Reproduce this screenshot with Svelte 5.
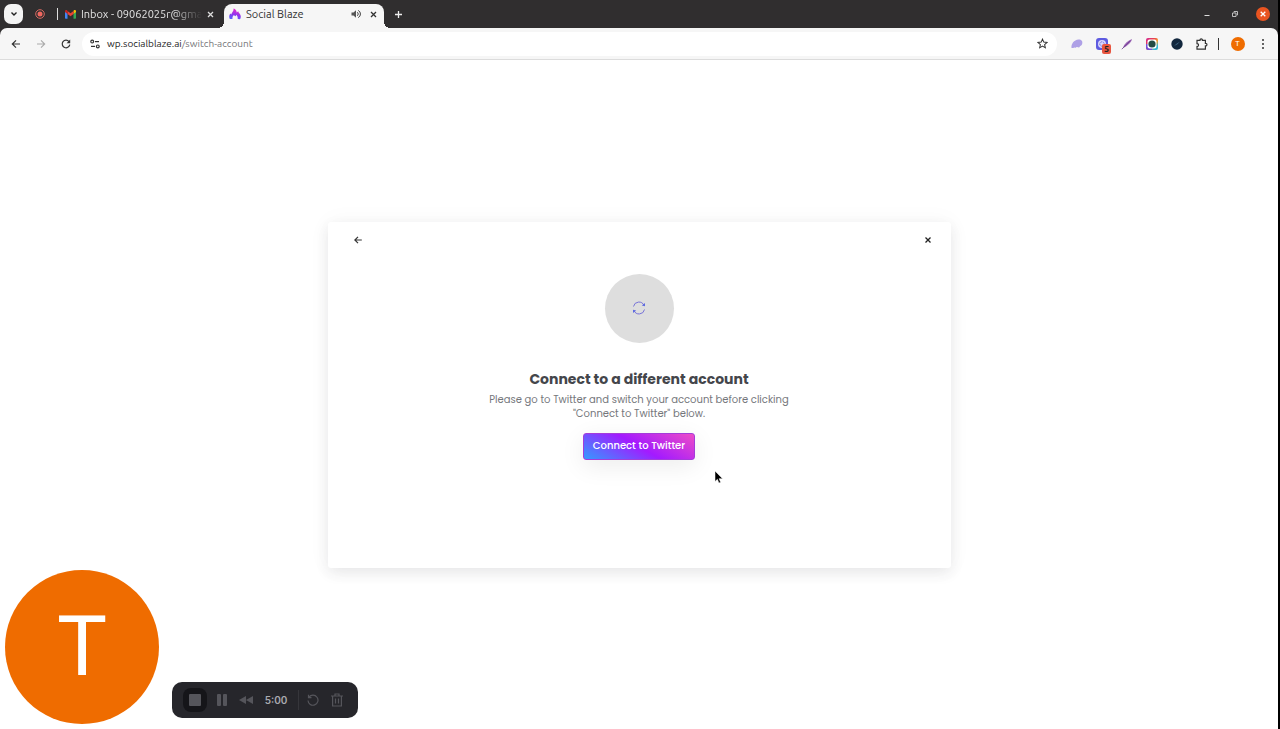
<script lang="ts">
  let address = $state('wp.socialblaze.ai/switch-account');
  const slash = $derived(address.indexOf('/'));
</script>

<div class="browser">
  <header class="chrome">
    <div class="tabstrip">
      <button class="tab-search" aria-label="Search tabs">
        <svg width="8" height="8" viewBox="0 0 8 8"><path d="M1.5 2.5 4 5l2.5-2.5" fill="none" stroke="#222" stroke-width="1.4" /></svg>
      </button>
      <button class="pinned" aria-label="Recording tab">
        <svg width="10" height="10" viewBox="0 0 10 10">
          <circle cx="5" cy="5" r="4.3" fill="none" stroke="#d96b63" />
          <circle cx="5" cy="5" r="2.5" fill="#f0675f" />
        </svg>
      </button>
      <span class="divider"></span>
      <div class="tab">
        <svg width="11" height="9" viewBox="0 0 22 18">
          <path d="M0 2.5V16a1.5 1.5 0 0 0 1.500 1.500H5V7z" fill="#4285f4" />
          <path d="M22 2.500V16a1.500 1.500 0 0 1-1.500 1.500H17V7z" fill="#34a853" />
          <path d="M17 2v6l5-4V2.500C22 .3 19.500-.6 17.800.7z" fill="#fbbc04" />
          <path d="M5 8V2l6 4.500L17 2v6l-6 4.500z" fill="#ea4335" />
          <path d="M0 2.500V4l5 4V2L4.200.7C2.500-.6 0 .3 0 2.500z" fill="#c5221f" />
        </svg>
        <span class="title fade">Inbox - 09062025r@gma</span>
        <button class="close" aria-label="Close Inbox tab">
          <svg width="7" height="7" viewBox="0 0 7 7"><path d="m1 1 5 5m0-5L1 6" stroke="#ddd" stroke-width="1.3" /></svg>
        </button>
      </div>
      <div class="tab active">
        <svg width="12" height="12" viewBox="0 0 12 12">
          <defs>
            <linearGradient id="blaze" x1="0" y1="1" x2="0.3" y2="0">
              <stop offset="0" stop-color="#4a6cff" />
              <stop offset=".5" stop-color="#8a35ee" />
              <stop offset="1" stop-color="#e22bd0" />
            </linearGradient>
          </defs>
          <path d="M4.500.6c2 .6 3.300 2 3.200 4l1.500-1.400c.3 1.300.9 1.800 1.700 2.800 1 1.500 1.300 3.500.1 5.200L8.700 11c.2-1.800-.3-3.200-1.500-4.200-.2.800-.5 1.200-1 1.400-.4-.6-.9-.9-1.500-1-.9 1-1.500 2-1.200 3.900L.8 11C-.2 9 .1 7 1.300 5.500l1 1C2.600 4.500 5 3.500 4.500.6z" fill="url(#blaze)" />
        </svg>
        <span class="title">Social Blaze</span>
        <button class="close" aria-label="Mute tab">
          <svg width="10" height="10" viewBox="0 0 10 10">
            <path d="M.5 3.500h2L5 1.200v7.600L2.500 6.500h-2z" fill="#555" />
            <path d="M6.300 3.200a2.300 2.300 0 0 1 0 3.600M7.200 1.400a4 4 0 0 1 0 7.200" fill="none" stroke="#444" />
          </svg>
        </button>
        <button class="close" aria-label="Close Social Blaze tab">
          <svg width="7" height="7" viewBox="0 0 7 7"><path d="m1 1 5 5m0-5L1 6" stroke="#333" stroke-width="1.3" /></svg>
        </button>
      </div>
      <button class="new-tab" aria-label="New tab">
        <svg width="9" height="9" viewBox="0 0 9 9"><path d="M4.500 1v7M1 4.500h7" stroke="#eee" stroke-width="1.3" /></svg>
      </button>
      <div class="window-controls">
        <button aria-label="Minimize">
          <svg width="8" height="8" viewBox="0 0 8 8"><path d="M1.500 5.500h5" stroke="#ddd" /></svg>
        </button>
        <button aria-label="Restore">
          <svg width="8" height="8" viewBox="0 0 8 8"><path d="M1.500 3h3.500v3.500H1.500zM3 2.500v-1h3.500V5h-1" fill="none" stroke="#ccc" stroke-width=".9" /></svg>
        </button>
        <button aria-label="Close window">
          <svg width="14" height="14" viewBox="0 0 14 14">
            <circle cx="7" cy="7" r="7" fill="#e95420" />
            <path d="m4.700 4.700 4.600 4.600m0-4.600L4.700 9.300" stroke="#fff" stroke-width="1.300" />
          </svg>
        </button>
      </div>
    </div>

    <nav class="toolbar">
      <button aria-label="Back">
        <svg width="10" height="10" viewBox="0 0 10 10"><path d="M9 5H1.500M5 1.300 1.300 5 5 8.700" fill="none" stroke="#333" stroke-width="1.200" /></svg>
      </button>
      <button aria-label="Forward" disabled>
        <svg width="10" height="10" viewBox="0 0 10 10"><path d="M1 5h7.500M5 1.300 8.700 5 5 8.700" fill="none" stroke="#aaa" stroke-width="1.100" /></svg>
      </button>
      <button aria-label="Reload">
        <svg width="10" height="10" viewBox="0 0 10 10">
          <path d="M8.800 5.600A3.800 3.800 0 1 1 8 2.600" fill="none" stroke="#333" stroke-width="1.200" />
          <path d="M9.200.6v3.600H5.600z" fill="#333" />
        </svg>
      </button>
      <div class="omnibox">
        <button aria-label="Site information">
          <svg width="10" height="10" viewBox="0 0 10 10" fill="none" stroke="#333" stroke-width="1.200">
            <circle cx="2.200" cy="2.600" r="1.400" /><path d="M5 2.600h4" />
            <circle cx="7.800" cy="7.400" r="1.400" /><path d="M1 7.400h4" />
          </svg>
        </button>
        <label class="address">
          <span class="url" aria-hidden="true"><b>{address.slice(0, slash)}</b>{address.slice(slash)}</span>
          <input type="text" aria-label="Address" bind:value={address} />
        </label>
        <button aria-label="Bookmark this tab">
          <svg width="11" height="11" viewBox="0 0 12 12"><path d="m6 1.200 1.400 3.300 3.600.3-2.700 2.400.8 3.500L6 8.800l-3.100 1.900.8-3.500L1 4.800l3.600-.3z" fill="none" stroke="#333" stroke-width="1.100" /></svg>
        </button>
      </div>
      <button aria-label="Extension: Loom">
        <svg width="12" height="10" viewBox="0 0 12 10"><path d="M.5 9C0 5 3 .8 7.500.5 11 .3 12 3 11 5.500 10.500 7 9 6.600 8.500 8 7.500 9.500 6.500 7 5.300 8.300 4.500 9.500 3.500 7.500 2.500 9z" fill="#aea0e6" /></svg>
      </button>
      <button class="badged" aria-label="Extension with 5 notifications">
        <svg width="12" height="12" viewBox="0 0 12 12">
          <rect width="12" height="12" rx="3" fill="#5e5be0" />
          <circle cx="6" cy="6" r="4" fill="#d8d7fa" />
          <circle cx="6" cy="6" r="2.200" fill="none" stroke="#5e5be0" stroke-dasharray="1 .7" />
        </svg>
        <span class="badge">5</span>
      </button>
      <button aria-label="Extension: Quill">
        <svg width="12" height="12" viewBox="0 0 12 12">
          <path d="M2 10C3 6 7 2.500 11 1c-.6 3-4.500 7-9 9z" fill="#9a63b4" />
          <path d="m.8 11.200 8.500-8.500" stroke="#6b3f91" stroke-width=".8" />
        </svg>
      </button>
      <button aria-label="Extension: Capture">
        <svg width="12" height="12" viewBox="0 0 12 12">
          <defs>
            <linearGradient id="lens" x1="0" y1="0" x2="1" y2="1">
              <stop offset="0" stop-color="#d1269b" /><stop offset=".35" stop-color="#e8424c" />
              <stop offset=".6" stop-color="#f3a52d" /><stop offset=".8" stop-color="#35b8d2" />
            </linearGradient>
          </defs>
          <rect width="12" height="12" rx="2" fill="url(#lens)" />
          <path d="M0 6v4a2 2 0 0 0 2 2h4V6z" fill="#7650d8" />
          <rect x="1.500" y="1.500" width="9" height="9" rx="2" fill="#fff" />
          <circle cx="6" cy="6" r="3.600" fill="#234b43" />
        </svg>
      </button>
      <button aria-label="Extension: Compass">
        <svg width="12" height="12" viewBox="0 0 12 12">
          <circle cx="6" cy="6" r="5.700" fill="#12273d" />
          <path d="m3 8 2.500-2.300L9 3.500 6.500 6.300z" fill="#426786" />
        </svg>
      </button>
      <button aria-label="Extensions">
        <svg width="12" height="12" viewBox="0 0 12 12"><path d="M1 2.300h3c-.2-1.800 2.600-1.800 2.400 0h3v3c2-.1 2 2.800 0 2.600v3.300H1V8.500c2 .1 2-3 0-2.900z" fill="none" stroke="#333" stroke-width="1.200" /></svg>
      </button>
      <span class="divider dark"></span>
      <button aria-label="Profile"><span class="profile">T</span></button>
      <button aria-label="Menu">
        <svg width="4" height="10" viewBox="0 0 4 10" fill="#333"><circle cx="2" cy="1" r="1" /><circle cx="2" cy="5" r="1" /><circle cx="2" cy="9" r="1" /></svg>
      </button>
    </nav>
  </header>

  <main>
    <section class="card">
      <div class="card-nav">
        <button aria-label="Go back">
          <svg width="8" height="8" viewBox="0 0 8 8"><path d="M7.800 4H1M4 .8.800 4 4 7.200" fill="none" stroke="#333" stroke-width="1.200" /></svg>
        </button>
        <button aria-label="Close">
          <svg width="6" height="6" viewBox="0 0 6 6"><path d="m.5.5 5 5m0-5-5 5" stroke="#222" stroke-width="1.300" /></svg>
        </button>
      </div>
      <div class="emblem">
        <svg width="14" height="14" viewBox="0 0 14 14" fill="none" stroke="#7773d8">
          <path d="M1.500 5.500A5.500 5.500 0 0 1 12 4.500M12.500 8.500A5.500 5.500 0 0 1 2 9.500" />
          <path d="M13 2v3.300L9.800 4.500zM1 12V8.700l3.200.8z" fill="#5f6be0" stroke="none" />
        </svg>
      </div>
      <h1>Connect to a different account</h1>
      <p>Please go to Twitter and switch your account before clicking "Connect to Twitter" below.</p>
      <button class="connect">Connect to Twitter</button>
    </section>
  </main>

  <aside class="recorder">
    <div class="camera">T</div>
    <div class="controls">
      <button class="stop" aria-label="Stop"><span></span></button>
      <button aria-label="Pause">
        <svg width="12" height="14" viewBox="0 0 12 14" fill="#55555b"><rect x="1" y="1" width="4" height="12" rx="1" /><rect x="7" y="1" width="4" height="12" rx="1" /></svg>
      </button>
      <button aria-label="Rewind">
        <svg width="14" height="8" viewBox="0 0 14 8" fill="#55555b"><path d="M7 0v8L0 4zM14 0v8L7 4z" /></svg>
      </button>
      <time>5:00</time>
      <span class="rule"></span>
      <button aria-label="Restart">
        <svg width="12" height="12" viewBox="0 0 12 12" fill="none" stroke="#55555b" stroke-width="1.200"><path d="M2 3.200A5 5 0 1 1 1 6.500M1.500.8v2.900h3" /></svg>
      </button>
      <button aria-label="Delete">
        <svg width="12" height="14" viewBox="0 0 12 14" fill="none" stroke="#55555b" stroke-width="1.200"><path d="M0 3h12M4 3V1h4v2M1.600 3v10h8.800V3M4.500 5.500v5M7.500 5.500v5" /></svg>
      </button>
    </div>
  </aside>

  <svg class="cursor" width="10" height="14" viewBox="0 0 10 14"><path d="M1 1v10.500l2.400-2.200 1.500 3.800 1.800-.8-1.600-3.600h3.500z" fill="#000" stroke="#fff" stroke-width=".5" /></svg>
</div>

<style>
  :global(body) {
    margin: 0;
    background: #000;
  }
  .browser {
    position: relative;
    display: flex;
    flex-direction: column;
    min-height: 100vh;
    margin-right: 2px;
    background: #fff;
    font-family: Ubuntu, 'Noto Sans', sans-serif;
    font-size: 11px;
    overflow: hidden;
  }
  button {
    display: flex;
    align-items: center;
    justify-content: center;
    padding: 0;
    border: 0;
    background: none;
    color: inherit;
    font: inherit;
  }
  svg {
    flex: none;
  }

  /* Tabs */
  .chrome {
    background: #302e2f;
  }
  .tabstrip {
    display: flex;
    align-items: center;
    height: 28px;
    padding: 0 1px 0 4px;
    color: #e4e4e4;
  }
  .tab-search {
    width: 19px;
    height: 20px;
    border-radius: 7px;
    background: #f4f4f4;
  }
  .pinned {
    width: 34px;
  }
  .divider {
    width: 1px;
    height: 12px;
    background: #ddd;
  }
  .tab {
    display: flex;
    align-items: center;
    box-sizing: border-box;
    gap: 5px;
    width: 160px;
    padding: 0 2px 0 7px;
  }
  .tab .fade {
    margin-right: -3px;
  }
  .tab.active {
    position: relative;
    align-self: stretch;
    margin: 4px 0 0 6px;
    padding: 0 4px 4px 5px;
    border-radius: 8px 8px 0 0;
    background: #f6f6f6;
    color: #333;
  }
  .tab.active::before,
  .tab.active::after {
    content: '';
    position: absolute;
    bottom: 0;
    width: 6px;
    height: 6px;
  }
  .tab.active::before {
    right: 100%;
    background: radial-gradient(circle at 0 0, transparent 6px, #f6f6f6 6px);
  }
  .tab.active::after {
    left: 100%;
    background: radial-gradient(circle at 100% 0, transparent 6px, #f6f6f6 6px);
  }
  .title {
    flex: 1;
    white-space: nowrap;
  }
  .fade {
    mask-image: linear-gradient(to right, #000 75%, transparent);
  }
  .close {
    width: 13px;
    height: 14px;
  }
  .new-tab {
    width: 28px;
    height: 20px;
  }
  .window-controls {
    display: flex;
    margin-left: auto;
  }
  .window-controls button {
    width: 28px;
    height: 20px;
  }

  /* Toolbar */
  .toolbar {
    display: flex;
    align-items: center;
    box-sizing: border-box;
    height: 32px;
    padding: 0 3px;
    border-bottom: 1px solid #dcdcdc;
    border-radius: 7px 7px 0 0;
    background: #f6f6f6;
    color: #222;
  }
  .toolbar button {
    flex: none;
    width: 25px;
    height: 24px;
  }
  .omnibox {
    flex: 1;
    display: flex;
    align-items: center;
    margin: 0 7px 0 4px;
    padding-right: 2px;
    border-radius: 12px;
    background: #fff;
  }
  .address {
    position: relative;
    flex: 1;
    font-size: 10px;
    line-height: 24px;
    color: #77777a;
  }
  .url b {
    font-weight: 400;
    color: #222;
  }
  .address input {
    position: absolute;
    inset: 0;
    width: 100%;
    padding: 0;
    border: 0;
    outline: 0;
    background: none;
    color: transparent;
    caret-color: #222;
    font: inherit;
  }
  .badged {
    position: relative;
  }
  .badge {
    position: absolute;
    right: 3px;
    bottom: 2px;
    width: 9px;
    border-radius: 2px;
    background: #e8553f;
    font-size: 9px;
    font-weight: 700;
    line-height: 10px;
  }
  .dark {
    margin: 0 6px 0 4px;
    background: #333;
  }
  .profile {
    width: 14px;
    border-radius: 50%;
    background: #ef6c00;
    color: #fff;
    font-family: Roboto, sans-serif;
    font-size: 8px;
    line-height: 14px;
  }

  /* Page */
  main {
    flex: 1;
    display: flex;
    align-items: center;
    justify-content: center;
    font-family: Poppins, Inter, sans-serif;
  }
  .card {
    display: flex;
    flex-direction: column;
    align-items: center;
    box-sizing: border-box;
    width: 100%;
    max-width: 623px;
    padding: 8px 18px 108px;
    border-radius: 3px;
    background: #fff;
    box-shadow:
      0 0 24px rgb(0 0 0 / 4%),
      0 5px 14px rgb(40 40 60 / 9%);
  }
  .card-nav {
    display: flex;
    justify-content: space-between;
    width: 100%;
    margin-bottom: 24px;
  }
  .card-nav button {
    width: 24px;
    height: 20px;
  }
  .card-nav button:last-child {
    width: 10px;
  }
  .emblem {
    display: grid;
    place-items: center;
    width: 69px;
    height: 69px;
    margin-bottom: 26px;
    border-radius: 50%;
    background: #dedede;
  }
  h1 {
    margin: 0;
    color: #44464b;
    font-size: 14px;
    font-weight: 700;
    line-height: 20px;
  }
  p {
    max-width: 310px;
    margin: 4px 0 12px;
    color: #75777c;
    font-size: 10px;
    line-height: 14px;
    text-align: center;
  }
  .connect {
    width: 112px;
    height: 27px;
    border: 1px solid #a43cda;
    border-radius: 3px;
    background: linear-gradient(30deg, #2fa0ff 0%, #a31aff 50%, #f04fc4 100%) border-box;
    box-shadow: 0 6px 24px rgb(0 0 0 / 8%);
    color: #fff;
    font-size: 10px;
    font-weight: 500;
  }

  /* Screen recorder overlay */
  .recorder {
    position: absolute;
    left: 5px;
    bottom: 5px;
    display: flex;
    align-items: flex-end;
    gap: 13px;
  }
  .camera {
    width: 154px;
    border-radius: 50%;
    background: #ef6c00;
    color: #fff;
    font-family: Roboto, sans-serif;
    font-size: 84px;
    line-height: 154px;
    text-align: center;
  }
  .controls {
    display: flex;
    align-items: center;
    box-sizing: border-box;
    height: 36px;
    margin-bottom: 6px;
    padding: 0 9px 0 11px;
    border-radius: 10px;
    background: #26262b;
    color: #aaaab0;
    font-family: Inter, sans-serif;
    font-size: 10px;
    font-weight: 600;
  }
  .controls button {
    width: 24px;
    height: 24px;
  }
  .controls .stop {
    margin-right: 3px;
    border-radius: 8px;
    background: #151519;
  }
  .stop span {
    width: 12px;
    height: 12px;
    border-radius: 1px;
    background: #55555b;
  }
  time {
    width: 36px;
    text-align: center;
  }
  .rule {
    width: 1px;
    height: 20px;
    margin: 0 2px 0 4px;
    background: #36363b;
  }
  .cursor {
    position: absolute;
    left: 714px;
    top: 470px;
  }
</style>
